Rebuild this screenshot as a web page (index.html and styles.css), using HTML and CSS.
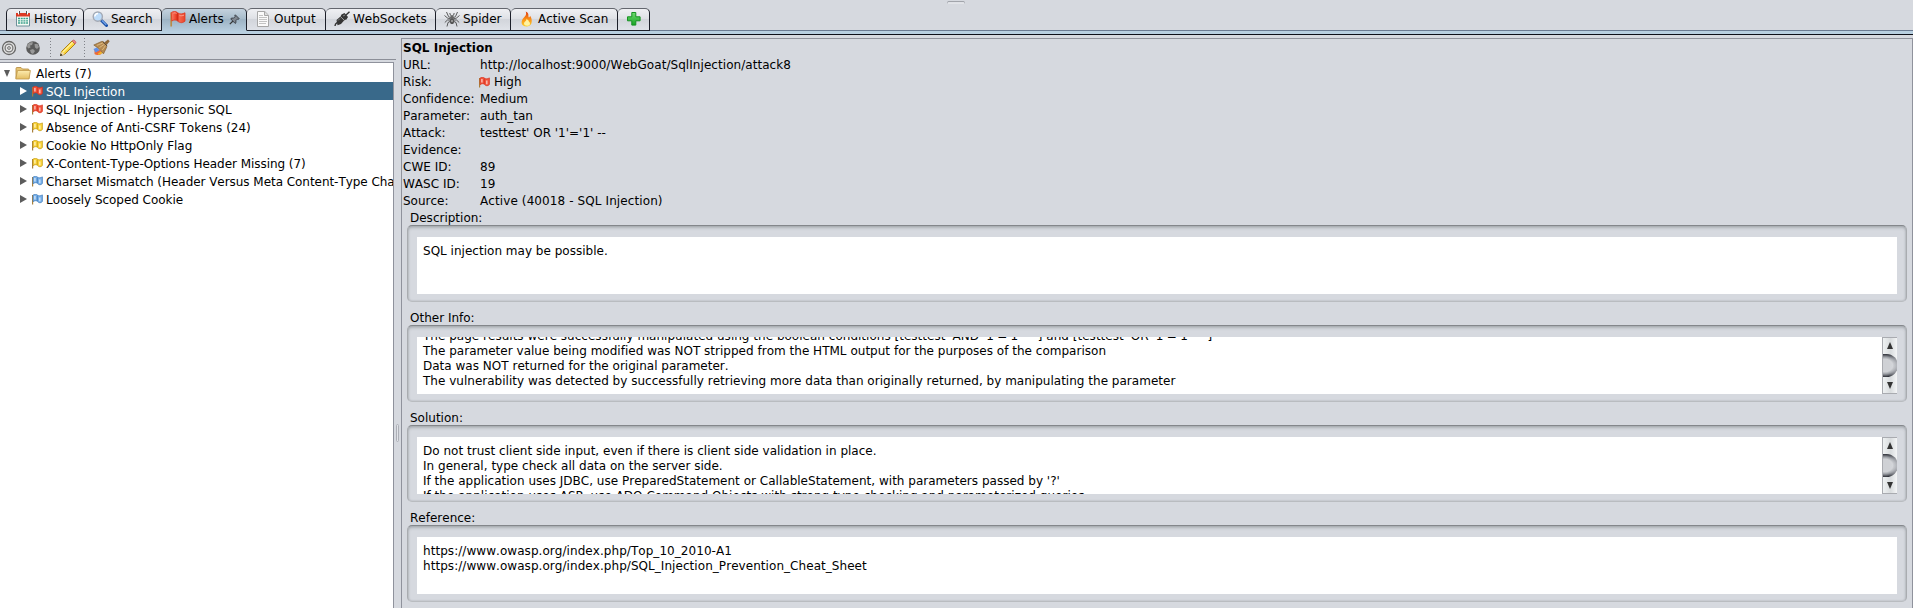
FILE: index.html
```
<!DOCTYPE html>
<html lang="en">
<head>
<meta charset="utf-8">
<title>Alerts</title>
<link rel="stylesheet" href="styles.css">
</head>
<body>
<svg class="defs" width="0" height="0">
  <defs>
    <linearGradient id="gr" x1="0" y1="0" x2="1" y2="0"><stop offset="0" stop-color="#f9806a"/><stop offset=".3" stop-color="#f04a30"/><stop offset=".45" stop-color="#d42c16"/><stop offset=".6" stop-color="#f6664c"/><stop offset="1" stop-color="#e8452c"/></linearGradient>
    <linearGradient id="gs" x1="0" y1="0" x2="0" y2="1"><stop offset="0" stop-color="#fdecb0"/><stop offset="1" stop-color="#e3bd62"/></linearGradient>
    <linearGradient id="gf" x1="0" y1="0" x2="0" y2="1"><stop offset="0" stop-color="#e03a10"/><stop offset=".5" stop-color="#f98e16"/><stop offset="1" stop-color="#fbd02a"/></linearGradient>
    <linearGradient id="gp" x1="0" y1="0" x2="0" y2="1"><stop offset="0" stop-color="#6fdc6f"/><stop offset="1" stop-color="#17a325"/></linearGradient>
    <symbol id="flag" viewBox="0 0 11 11"><path d="M.6 1v9.500" stroke="#a8803c" stroke-width="1.200"/><path d="M1 1.200C2.300 0 4.500 0 5.300 1 6.500 2.200 8.600 2 10.400.9V7.500C8.800 9.200 7 9.200 5.600 7.500 4.300 6.300 2.600 6.500 1.200 7.700Z" fill="currentColor" stroke="var(--edge)" stroke-width=".7"/><path d="M2.900 2v3.500M7.800 3.500v3.700" stroke="#fff" stroke-opacity=".6" stroke-width="1.500"/><path d="M5.300 1.500v5.500" stroke="var(--edge)" stroke-width=".8"/></symbol>
  </defs>
</svg>
<div class="app">
  <div class="split-top"><i></i></div>
  <nav class="tabs">
    <div class="tab t-history"><svg width="16" height="16" viewBox="0 0 16 16"><path d="M1.500 3h13v12h-13z" fill="#f6fbf4" stroke="#6f8f9a"/><path d="M1 2h14v3.500H1z" fill="#dd3a24"/><path d="M3.500 0v3.500M12.500 0v3.500" stroke="#fff"/><path d="M4.500 0v3M11.500 0v3" stroke="#555"/><path d="M3 7.500h10M3 9.800h10M3 12h10" stroke="#3aa08c" stroke-width="1.300" stroke-dasharray="2 .7"/></svg><span>History</span></div>
    <div class="tab t-search"><svg width="16" height="16" viewBox="0 0 16 16"><path d="m9.500 9.500 5 5" stroke="#184fa8" stroke-width="3" stroke-linecap="round"/><path d="m10 9.500 4.300 4.300" stroke="#78a8ec" stroke-width="1.200"/><circle cx="5.800" cy="5.600" r="4.600" fill="#bddcfa" stroke="#a3a9b4" stroke-width="1.400"/><path d="M2.800 5.500C3 3.500 4.500 2.500 6 2.500" stroke="#fff" stroke-width="1.500" fill="none"/></svg><span>Search</span></div>
    <div class="tab t-alerts active"><svg width="16" height="16" viewBox="0 0 16 16"><path d="M1.200 1.500v14" stroke="#b88b48" stroke-width="1.700"/><path d="M1.300 1.500C3.500 0 6 .2 7.600 1.800 10 3.600 12.500 3 15 1.800v8.400c-2.500 2-5 1.900-7.200 0C6 8.500 4 8.600 1.800 10Z" fill="url(#gr)" stroke="#de3a22" stroke-width=".8"/><path d="M3.500 2.200C5 1.500 6 2 6.600 2.700M9.500 4.400c1.500.6 3 .4 4.500-.3" stroke="#ffb4a4" stroke-width=".8" fill="none"/></svg><span>Alerts</span><svg class="pin" width="11" height="11" viewBox="0 0 11 11"><path d="M.8 10.200 4.500 6.500" stroke="#333" stroke-width="1.200"/><path d="m6.300.8 3.900 3.900-1 .6-.8-.2-1.600 1.600.2 2-.9.7L1.800 5l.7-1 2 .2L6.100 2.600 5.800 1.500Z" fill="#7f868f" stroke="#33383f" stroke-width=".9"/></svg></div>
    <div class="tab t-output"><svg width="16" height="16" viewBox="0 0 16 16"><path d="M2.500.5h7.300l3.700 3.700v11.300h-11z" fill="#fafafa" stroke="#a6a6a6"/><path d="M9.500.7v3.800h3.800" fill="#ddd" stroke="#a6a6a6"/><path d="M4 4.500h4M4 6.500h8M4 8.500h8M4 10.500h8M4 12.500h7" stroke="#c3c3c3"/></svg><span>Output</span></div>
    <div class="tab t-ws"><svg width="16" height="16" viewBox="0 0 16 16"><path d="M1 15c0-3 1.500-3 3-4M11.500 4.500 15.500.7" stroke="#333" stroke-width="1.400" fill="none"/><path d="m2.500 9 4-3.500 1-2 3-1.500 3.500 4-1.500 2.500-2 .5-3.500 4-3.500 1.200Z" fill="#353535"/><path d="m6.200 5.300 4.600 4.500" stroke="#aaa" stroke-width=".9"/><path d="m4 9.500 2-2M9 5l2-1" stroke="#888"/></svg><span>WebSockets</span></div>
    <div class="tab t-spider"><svg width="16" height="16" viewBox="0 0 16 16" fill="none"><path d="M7 7 4.500 5.500 2.500 1M7 8 3.500 7 .5 4.500M7 9 3.500 9 .8 11.500M7 10l-3 1.500-1 4M9 7l2.500-1.500 2-4.500M9 8l3.500-1 3-2.500M9 9l3.500 0 2.700 2.500M9 10l3 1.500 1 4M6.500 4.500 5.800 2M9.500 4.500l.7-2.500" stroke="#4a4a4a" stroke-width=".9"/><ellipse cx="8" cy="6" rx="1.700" ry="2" fill="#666"/><ellipse cx="8" cy="10.200" rx="2.100" ry="2.900" fill="#555"/><circle cx="8" cy="10" r="1" fill="#aaa"/></svg><span>Spider</span></div>
    <div class="tab t-scan"><svg width="16" height="16" viewBox="0 0 16 16"><path d="M6.700.5C11 2.500 8.500 5 10 6.500 11.200 5.800 11 4.800 11 4.800c2.500 2.800 3 10.500-3 10.700C1 15.500 2 9.500 4.500 7 6.500 5 7.800 3.500 6.700.5Z" fill="url(#gf)"/><path d="M7.500 7.500C8 10 5 10.500 5 12.600c0 3 6 3 6 .1 0-2-1.500-1.700-1.500-3.200-.8-.5-1.200-1-2-2Z" fill="#fff4a0"/></svg><span>Active Scan</span></div>
    <div class="tab t-plus"><svg width="16" height="16" viewBox="0 0 16 16"><path d="M5.800 1.500h4v4.300h4.300v4H9.800v4.300h-4V9.800H1.500v-4h4.300Z" fill="url(#gp)" stroke="#169222"/></svg></div>
  </nav>
  <div class="tabline"></div>
  <main>
    <section class="left">
      <div class="toolbar">
        <svg width="16" height="16" viewBox="0 0 16 16" fill="none"><circle cx="8" cy="8" r="6.500" fill="#e4e4e4" stroke="#666" stroke-width="1.300"/><circle cx="8" cy="8" r="3.900" stroke="#777" stroke-width="1.300"/><circle cx="8" cy="8" r="1.400" fill="#ddd" stroke="#777"/></svg>
        <svg class="globe" width="16" height="16" viewBox="0 0 16 16"><circle cx="8" cy="8" r="6.800" fill="#5b5b5b"/><path d="M3 4c2-2 4-2 5-1.500L7 5l-2 .5.500 2L3 8.500 2 6ZM9.500 4l3 0 1.500 3-2 2-2-1.500ZM5 10l3-1 2 2-2 3-2-1Z" fill="#999"/></svg>
        <i class="sep"></i>
        <svg class="pencil" width="18" height="18" viewBox="0 0 18 18"><path d="m1.500 16.500 1.200-4.200L13 2l3 3L5.700 15.300Z" fill="#fbd63b" stroke="#a8780c" stroke-width=".9"/><path d="m4 13 9.800-9.800" stroke="#fff19b" stroke-width="1.300"/><path d="m13 2 1-1c1-.6 3.500 1.800 3 3l-1 1Z" fill="#ee8585" stroke="#b65a55" stroke-width=".6"/><path d="m1.500 16.500 1.200-4 3 2.800Z" fill="#f3dcae"/><path d="m1 17 .8-2.400 1.700 1.600Z" fill="#222"/></svg>
        <i class="sep"></i>
        <svg class="broom" width="17" height="17" viewBox="0 0 17 17"><path d="M1.500 11c3-2 7 0 7 3 0 2.500-5 2.500-7 1Z" fill="#ee6b35"/><path d="M.5 10 4 8.500l2.500 3-4 2Z" fill="#5f8fe8"/><path d="M5 14.500 8 12.500l2 1.500-4.500 2Z" fill="#eeb52c"/><path d="M.8 6 8.500 2.500Q10 2 11.200 3.500L13.500 6Q14.200 7.500 13.300 9L10.500 14.800Q7 9.500.8 6Z" fill="#b58a52" stroke="#85602f" stroke-width=".7"/><path d="m3.800 6.400 6-2.400M6.500 8.500l5-3.300M9.300 11l3.200-4.500" stroke="#e5c58c" stroke-width=".8"/><path d="m11.300 3.500 3.700-3 1.700 1.700L13.600 6Z" fill="#8f6839"/><path d="m10 2.800 4 4.200" stroke="#5e4a36"/></svg>
      </div>
      <div class="tree">
        <div class="row root"><i class="down"></i><svg width="16" height="14" viewBox="0 0 16 14"><path d="M1 12.500V2.500q0-1 1-1h4l1.500 1.500H13q1 0 1 1v8.500Z" fill="#e6c575" stroke="#b2883a" stroke-width=".8"/><path d="M2.500 4.500H15.400L14 13H.8Z" fill="url(#gs)" stroke="#bf9749" stroke-width=".8"/></svg><span>Alerts (7)</span></div>
        <div class="row sel"><i class="right"></i><svg class="flag red" width="11" height="11"><use href="#flag"/></svg><span>SQL Injection</span></div>
        <div class="row"><i class="right"></i><svg class="flag red" width="11" height="11"><use href="#flag"/></svg><span>SQL Injection - Hypersonic SQL</span></div>
        <div class="row"><i class="right"></i><svg class="flag yellow" width="11" height="11"><use href="#flag"/></svg><span>Absence of Anti-CSRF Tokens (24)</span></div>
        <div class="row tight"><i class="right"></i><svg class="flag yellow" width="11" height="11"><use href="#flag"/></svg><span>Cookie No HttpOnly Flag</span></div>
        <div class="row tight"><i class="right"></i><svg class="flag yellow" width="11" height="11"><use href="#flag"/></svg><span>X-Content-Type-Options Header Missing (7)</span></div>
        <div class="row tight"><i class="right"></i><svg class="flag blue" width="11" height="11"><use href="#flag"/></svg><span>Charset Mismatch (Header Versus Meta Content-Type Cha</span></div>
        <div class="row tight"><i class="right"></i><svg class="flag blue" width="11" height="11"><use href="#flag"/></svg><span>Loosely Scoped Cookie</span></div>
      </div>
    </section>
    <div class="divider"><i></i></div>
    <section class="detail">
      <h1>SQL Injection</h1>
      <dl>
        <dt>URL:</dt><dd class="url">http://localhost:9000/WebGoat/SqlInjection/attack8</dd>
        <dt>Risk:</dt><dd><svg class="flag red" width="11" height="11"><use href="#flag"/></svg>High</dd>
        <dt>Confidence:</dt><dd>Medium</dd>
        <dt>Parameter:</dt><dd>auth_tan</dd>
        <dt>Attack:</dt><dd>testtest' OR '1'='1' --</dd>
        <dt>Evidence:</dt><dd></dd>
        <dt>CWE ID:</dt><dd>89</dd>
        <dt>WASC ID:</dt><dd>19</dd>
        <dt>Source:</dt><dd class="wide">Active (40018 - SQL Injection)</dd>
      </dl>
      <div class="group"><h2>Description:</h2><div class="frame"><div class="area"><div class="text"><p>SQL injection may be possible.</p></div></div></div></div>
      <div class="group"><h2>Other Info:</h2><div class="frame"><div class="area"><div class="text scrolled"><p>The page results were successfully manipulated using the boolean conditions [testtest' AND '1'='1' -- ] and [testtest' OR '1'='1' -- ]</p><p>The parameter value being modified was NOT stripped from the HTML output for the purposes of the comparison</p><p>Data was NOT returned for the original parameter.</p><p>The vulnerability was detected by successfully retrieving more data than originally returned, by manipulating the parameter</p></div><div class="scroll"><i class="up"></i><b></b><i class="dn"></i></div></div></div></div>
      <div class="group"><h2>Solution:</h2><div class="frame"><div class="area"><div class="text"><p>Do not trust client side input, even if there is client side validation in place.</p><p>In general, type check all data on the server side.</p><p>If the application uses JDBC, use PreparedStatement or CallableStatement, with parameters passed by '?'</p><p>If the application uses ASP, use ADO Command Objects with strong type checking and parameterized queries.</p></div><div class="scroll"><i class="up"></i><b></b><i class="dn"></i></div></div></div></div>
      <div class="group"><h2>Reference:</h2><div class="frame"><div class="area"><div class="text"><p class="url">https://www.owasp.org/index.php/Top_10_2010-A1</p><p class="url">https://www.owasp.org/index.php/SQL_Injection_Prevention_Cheat_Sheet</p></div></div></div></div>
    </section>
  </main>
</div>
</body>
</html>
```
FILE: styles.css
```
* { box-sizing: border-box; }
body { margin: 0; background: #d6d9df; color: #000; font: 12px/15px "DejaVu Sans", sans-serif; font-kerning: none; font-variant-ligatures: none; overflow: hidden; }
h1, h2, p, dl, dd { margin: 0; font-size: 12px; font-weight: normal; }
svg { display: block; flex: none; }
i { display: block; flex: none; }
.defs { position: absolute; }
.app { width: 1913px; height: 608px; display: flex; flex-direction: column; overflow: hidden; }

.split-top { height: 8px; flex: none; display: flex; justify-content: center; }
.split-top i { width: 18px; height: 3px; margin: 1px 2px 0 0; border: 1px solid #b1b4ba; border-top-color: #a2a5ab; border-bottom-color: #e2e4e8; border-radius: 2px; background: #dfe1e6; }

.tabs { height: 23px; flex: none; display: flex; padding-left: 6px; background: linear-gradient(#d6d9df 22px, #6b7b92 22px); }
.tab { height: 23px; flex: none; display: flex; align-items: center; padding: 0 0 1px 8px; border: 1px solid #1c1f29; border-top-color: #63666e; border-left-width: 0; border-radius: 5px 5px 0 0; background: linear-gradient(#eff0f3, #dfe1e6 45%, #d2d5db 50%, #dfe2e8); white-space: nowrap; }
.tab:first-child { border-left-width: 1px; }
.tab span { margin-left: 3px; }
.tab.active { background: linear-gradient(#c4d2de, #a8bccb 45%, #9db3c4 50%, #b5cbdc); border-bottom-color: #b5cbdc; }
.t-history { width: 78px; }
.t-search { width: 78px; }
.t-alerts { width: 85px; }
.t-output { width: 79px; }
.t-ws { width: 110px; }
.t-spider { width: 75px; }
.t-scan { width: 107px; }
.t-plus { width: 32px; }
.pin { margin-left: 5px; }
.tabline { height: 4px; flex: none; background: #b8cfe0; border-bottom: 1px solid #0d0f18; }

main { flex: 1; display: flex; min-height: 0; }
.left { width: 394px; flex: none; display: flex; flex-direction: column; }
.toolbar { height: 25px; flex: none; width: 396px; display: flex; align-items: center; padding: 1px 0 0 1px; border-bottom: 1px solid #8c8f98; }
.toolbar .globe { margin-left: 8px; }
.sep { width: 1px; height: 20px; background: repeating-linear-gradient(#808389 0 1px, transparent 1px 3px); }
.globe + .sep { margin-left: 9px; }
.pencil { margin-left: 8px; }
.pencil + .sep { margin-left: 7px; }
.broom { margin-left: 8px; }
.tree { flex: 1; margin-top: 2px; padding-top: 1px; background: #fff; border-top: 1px solid #8f929c; border-right: 1px solid #8f929c; overflow: hidden; }
.row { height: 18px; display: flex; align-items: center; padding-left: 20px; white-space: nowrap; overflow: hidden; }
.row.root { padding-left: 4px; }
.row span { margin-left: 3px; padding-top: 2px; }
.row .flag { margin-left: 5px; }
.row.root span { margin-left: 5px; }
.tight { letter-spacing: -.045px; }
.root svg { margin-left: 5px; }
.sel { background: #39698a; color: #fff; }
.down { border: 3.500px solid transparent; border-top: 7px solid #5c5c5c; border-bottom: 0; }
.right { border: 4px solid transparent; border-left: 7px solid #5c5c5c; border-right: 0; }
.sel .right { border-left-color: #fff; }
.red { color: #f2543c; --edge: #d5301c; }
.yellow { color: #fbd43a; --edge: #c39a12; }
.blue { color: #78b1ea; --edge: #3d78b8; }

.divider { width: 7px; flex: none; display: flex; align-items: flex-start; padding: 389px 0 0 2px; }
.divider i { width: 3px; height: 18px; border: 1px solid #adb0b7; border-radius: 2px; background: #e2e4e9; }

.detail { flex: 1; margin-top: 3px; border: solid #8f929c; border-width: 1px 1px 0; padding: 1px 0 0 1px; overflow: hidden; }
.detail h1 { font-weight: bold; height: 17px; line-height: 17px; }
dl { display: grid; grid-template-columns: 77px 1fr; grid-auto-rows: 17px; line-height: 17px; white-space: nowrap; }
dd { display: flex; align-items: center; }
dd .flag { margin: 0 4px 0 -1px; }
.wide { letter-spacing: .1px; }
.url { letter-spacing: .055px; }
.group { height: 100px; padding: 0 5px 0 4px; }
.group:last-child { height: 98px; }
.group h2 { height: 15px; line-height: 16px; padding-left: 3px; }
.frame { height: 77px; padding: 11px 9px 7px 9px; border: 1px solid #a9acb0; border-top-color: #84878b; border-bottom-color: #b9bcc0; border-radius: 5px; box-shadow: inset 0 2px 3px rgba(90,95,100,.3), inset 0 0 2px rgba(90,95,100,.35); }
.area { height: 57px; display: flex; background: #fff; overflow: hidden; }
.text { flex: 1; padding: 7px 6px 0; white-space: nowrap; letter-spacing: .015px; }
.text p { height: 15px; }
.scrolled { margin-top: -15px; }
.scroll { width: 15px; flex: none; display: flex; flex-direction: column; align-items: center; overflow: hidden; border: solid #a9abb0; border-width: 1px 0 1px 1px; background: linear-gradient(90deg, #eef1f2, #d9dcde 55%, #f4f5f6); }
.scroll i { border: 3.500px solid transparent; }
.scroll .up { margin-top: 4px; border-bottom: 7px solid #333; border-top: 0; }
.scroll .dn { margin-top: 5px; border-top: 7px solid #333; border-bottom: 0; }
.scroll b { width: 15px; height: 23px; margin-top: 5px; flex: none; border-radius: 0 12px 12px 0; background: linear-gradient(90deg, transparent 40%, rgba(225,227,231,.7)), radial-gradient(ellipse 14px 11.500px at 2px 50%, #cfd1d5 55%, #9a9da3 74%, #35373f 98%); }
```
